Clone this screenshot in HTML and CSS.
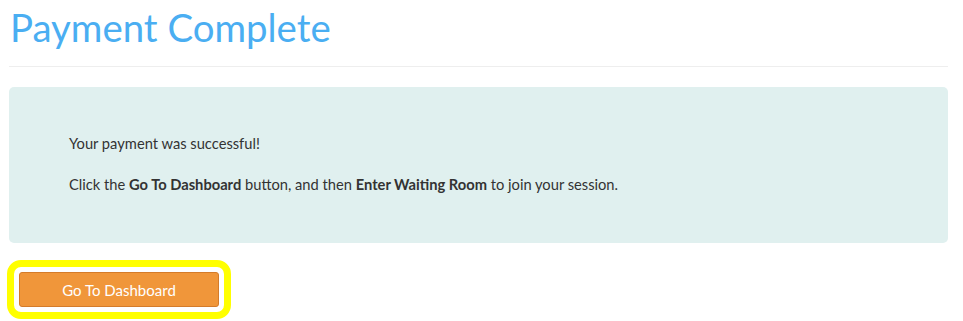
FILE: index.html
```html
<!DOCTYPE html>
<html>
<head>
<meta charset="utf-8">
<link rel="stylesheet" href="styles.css">
</head>
<body>
<main class="page">
  <h1 class="title">Payment Complete</h1>
  <hr class="rule">
  <section class="notice">
    <p>Your payment was successful!</p>
    <p>Click the <strong>Go To Dashboard</strong> button, and then <strong>Enter Waiting Room</strong> to join your session.</p>
  </section>
  <div class="actions">
    <span class="highlight">
      <button class="btn">Go To Dashboard</button>
    </span>
  </div>
</main>
</body>
</html>
```
FILE: styles.css
```css
html, body {
  margin: 0;
  padding: 0;
  background: #ffffff;
}
body {
  font-family: "Lato", "Open Sans", sans-serif;
  color: #333333;
}
.page {
  width: 939px;
  margin-left: 9px;
}
.title {
  margin: 0;
  padding-top: 4px;
  padding-left: 1px;
  font-family: "Lato", sans-serif;
  font-weight: 400;
  font-size: 38.4px;
  line-height: 46px;
  color: #4aaef2;
}
.rule {
  border: 0;
  border-top: 1px solid #eeeeee;
  margin: 16px 0 20px 0;
}
.notice {
  background: #e0f0ef;
  border-radius: 5px;
  padding: 46px 60px 49px 60px;
  font-size: 14.7px;
  line-height: 20px;
}
.notice p {
  margin: 0;
}
.notice p + p {
  margin-top: 21px;
}
.notice strong {
  font-weight: 700;
}
.actions {
  margin-top: 17px;
  margin-left: -2px;
}
.highlight {
  display: inline-block;
  border: 7px solid #ffff00;
  border-radius: 14px;
  padding: 5px 5px;
}
.btn {
  display: block;
  width: 200px;
  height: 35px;
  background: #f0963a;
  border: 1px solid #d47b2a;
  border-radius: 3px;
  color: #ffffff;
  font-family: "Lato", sans-serif;
  font-size: 15px;
  padding: 0;
}
```
